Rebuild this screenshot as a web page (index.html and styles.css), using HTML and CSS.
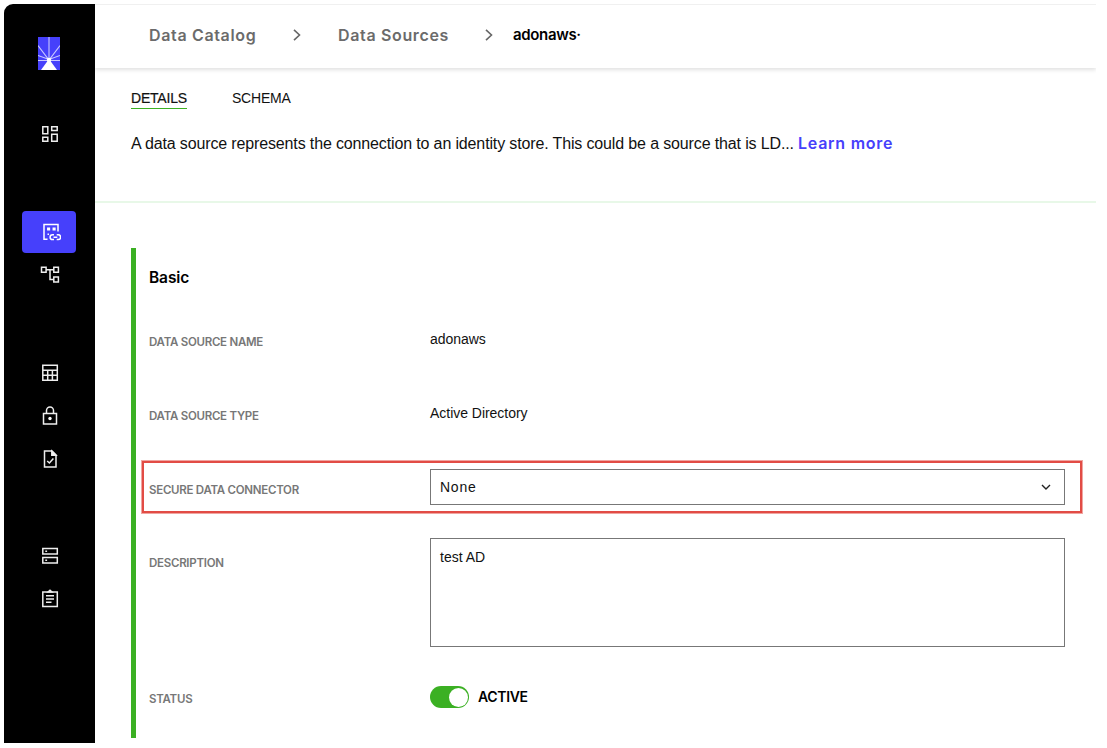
FILE: index.html
```
<!DOCTYPE html>
<html lang="en">
<head>
<meta charset="utf-8">
<title>Data Sources - adonaws</title>
<link rel="stylesheet" href="styles.css">
</head>
<body>
<div class="app">
  <nav class="sidebar">
    <svg class="logo" viewBox="0 0 22 33"><rect width="22" height="33" fill="#4640fb"/><path d="M11 0v23M0 8.500l11 14.500L22 8.500M0 18.500l11 4 11-4M0 23.500h22" fill="none" stroke="#c9c8ff" stroke-width="1.100"/><path d="M11 22L3 33h16z" fill="#fff"/><circle cx="11" cy="23" r="2.200" fill="#fff"/></svg>
    <a class="item dash"><svg viewBox="0 0 20 20"><path d="M2.800 2.800h5v6.900h-5zM11.700 2.800h5.500v3.700h-5.500zM2.800 13.300h5v4h-5zM11.700 10.300h5.500v7h-5.500z"/></svg></a>
    <a class="item active"><svg viewBox="0 0 20 20"><path d="M6.500 17.200H3V2.500h14v7"/><path d="M6.800 6.200h1.600v1.600H6.800zM12.300 6.200h1.600v1.600h-1.600z"/><path d="M6.500 12.300h1.500"/><path d="M13 12.800h-1.500a2.400 2.400 0 0 0 0 4.800H13M15.700 12.800h1.500a2.400 2.400 0 0 1 0 4.800h-1.500M12.500 15.200h3.800"/></svg></a>
    <a class="item"><svg viewBox="0 0 20 20"><path d="M1.500 2.300h4.600v4.900H1.500zM13.800 2.300h4.600v4.900h-4.600zM13.800 12h4.600v5h-4.600zM6.200 4.800h7.500M10 4.800v9.600h3.700"/></svg></a>
    <a class="item table"><svg viewBox="0 0 20 20"><path d="M2.800 2.300h14.500v14.900H2.800zM2.800 7.200h14.500M2.800 12.200h14.500M7.700 7.200v10M12.400 7.200v10"/></svg></a>
    <a class="item"><svg viewBox="0 0 20 20"><path d="M3.500 7.500h13v10.500h-13zM6.500 7.500V4.500a3.500 3.500 0 0 1 7 0v3"/><circle cx="10" cy="12.500" r="1.700" fill="#fff" stroke="none"/></svg></a>
    <a class="item"><svg viewBox="0 0 20 20"><path d="M4.500 2h7.500l4 4v12H4.500zM7.200 12l2.200 2 4-4.500"/><path d="M11.800 2v4.200H16z" fill="#fff"/></svg></a>
    <a class="item server"><svg viewBox="0 0 20 20"><path d="M2.800 2.500h14.500v5.600H2.800zM2.800 11.500h14.500v5.600H2.800z"/><path d="M5.300 5.300h1.800M5.300 14.300h1.800"/></svg></a>
    <a class="item"><svg viewBox="0 0 20 20"><path d="M2.800 3h14.500v14.500H2.800zM6 6.800h8M6 10h8M6 13.200h5.500"/><path d="M8 3l2-1.800L12 3z" fill="#fff"/></svg></a>
  </nav>
  <main class="main">
    <header class="crumbs">
      <span class="crumb c1">Data Catalog</span>
      <svg class="chev" viewBox="0 0 8 12"><path d="M1 .8L6.500 6 1 11.200"/></svg>
      <span class="crumb c2">Data Sources</span>
      <svg class="chev" viewBox="0 0 8 12"><path d="M1 .8L6.500 6 1 11.200"/></svg>
      <span class="current">adonaws·</span>
    </header>
    <section class="intro">
      <div class="tabs"><span class="tab on">DETAILS</span><span class="tab">SCHEMA</span></div>
      <p class="about"><span class="sentence">A data source represents the connection to an identity store. This could be a source that is LD...</span><a class="learn">Learn more</a></p>
    </section>
    <section class="panel">
      <h2>Basic</h2>
      <div class="row"><span class="label">DATA SOURCE NAME</span><span class="value">adonaws</span></div>
      <div class="row"><span class="label">DATA SOURCE TYPE</span><span class="value">Active Directory</span></div>
      <div class="row boxed"><span class="label">SECURE DATA CONNECTOR</span><div class="select"><span>None</span><svg viewBox="0 0 10 6"><path d="M1 1l4 4 4-4"/></svg></div></div>
      <div class="row desc"><span class="label">DESCRIPTION</span><div class="area">test AD</div></div>
      <div class="row"><span class="label">STATUS</span><div class="toggle"><i class="knob"></i></div><span class="state">ACTIVE</span></div>
    </section>
  </main>
</div>
</body>
</html>
```
FILE: styles.css
```
*, *::after { box-sizing: border-box; }
body { margin: 0; background: #fff; font-family: "Liberation Sans", sans-serif; color: #111; }
.app { display: flex; width: 1092px; height: 739px; margin: 4px 0 0 4px; overflow: hidden; }
.sidebar { width: 91px; background: #000; border-radius: 9px 0 0 0; display: flex; flex-direction: column; align-items: center; padding: 33px 1px 0 0; }
.logo { width: 22px; height: 33px; margin-bottom: 42px; flex: none; }
.item { width: 54px; height: 43px; display: flex; align-items: center; justify-content: center; border-radius: 4px; padding-left: 1px; flex: none; }
.item svg { width: 20px; height: 20px; fill: none; stroke: #eee; stroke-width: 1.5; }
.active { background: #4640fb; height: 42px; }
.active svg { margin-left: 2px; stroke: #fff; }
.dash { margin-bottom: 56px; }
.table { margin-top: 55px; }
.server { margin-top: 54px; }
.main { flex: 1; min-width: 0; }
.crumbs { height: 64px; display: flex; align-items: center; padding: 0 0 3px 54px; border-top: 1px solid #f0f0f0; box-shadow: 0 2px 4px rgba(0,0,0,.12); white-space: nowrap; }
.crumb { color: #6b6b6b; font: 600 16px/20px Inter, sans-serif; letter-spacing: .65px; }
.c1 { width: 144px; }
.c2 { width: 147px; margin-left: 37px; }
.chev { width: 8px; height: 12px; fill: none; stroke: #666; stroke-width: 1.6; flex: none; }
.current { font: 600 15px/20px Inter, sans-serif; letter-spacing: -.35px; margin-left: 20px; color: #000; }
.intro { height: 135px; padding: 22px 0 0 36px; border-bottom: 2px solid #e8f8e8; }
.tabs { display: flex; gap: 45px; font-size: 14px; line-height: 17px; height: 19px; letter-spacing: -.2px; }
.on { border-bottom: 1px solid #3bb023; -webkit-text-stroke: .2px #111; }
.about { margin: 25px 0 0; font-size: 16px; line-height: 20px; white-space: nowrap; display: flex; }
.sentence { letter-spacing: -.14px; width: 667px; }
.learn { color: #4640fb; font: 600 16px/18px Inter, sans-serif; letter-spacing: .75px; }
.panel { margin: 45px 0 0 36px; border-left: 5px solid #3bb023; height: 490px; padding-left: 13px; }
h2 { margin: 0; padding-top: 20px; font: 600 15.5px/20px Inter, sans-serif; letter-spacing: -.1px; height: 54px; color: #000; }
.row { display: flex; height: 74px; }
.label { width: 281px; flex: none; font: 600 11.5px/16px Inter, sans-serif; letter-spacing: -.27px; color: #777; padding-top: 32px; }
.value { font-size: 14px; line-height: 18px; padding-top: 28px; letter-spacing: -.03px; }
.boxed { position: relative; }
.boxed::after { content: ""; position: absolute; left: -7.5px; top: 10.5px; width: 940px; height: 52px; border: 2px solid #e24c45; outline: .5px solid #f0a5a1; }
.select { width: 635px; height: 36px; margin-top: 19px; border: 1px solid #777; display: flex; align-items: center; justify-content: space-between; padding: 0 13px 0 9px; font-size: 14px; letter-spacing: .75px; }
.select svg { width: 10px; height: 6px; fill: none; stroke: #222; stroke-width: 1.4; }
.desc { height: 135px; }
.desc .label { padding-top: 31px; }
.area { width: 635px; height: 109px; margin-top: 14px; border: 1px solid #777; padding: 9px; font-size: 14px; line-height: 18px; }
.toggle { width: 39px; height: 22px; margin-top: 27px; background: #3bb023; border-radius: 11px; padding: 1.5px; display: flex; justify-content: flex-end; flex: none; }
.knob { width: 19px; height: 19px; border-radius: 50%; background: #fff; }
.state { font: 600 14px/18px Inter, sans-serif; letter-spacing: -.35px; margin: 29px 0 0 9px; color: #000; }
```
